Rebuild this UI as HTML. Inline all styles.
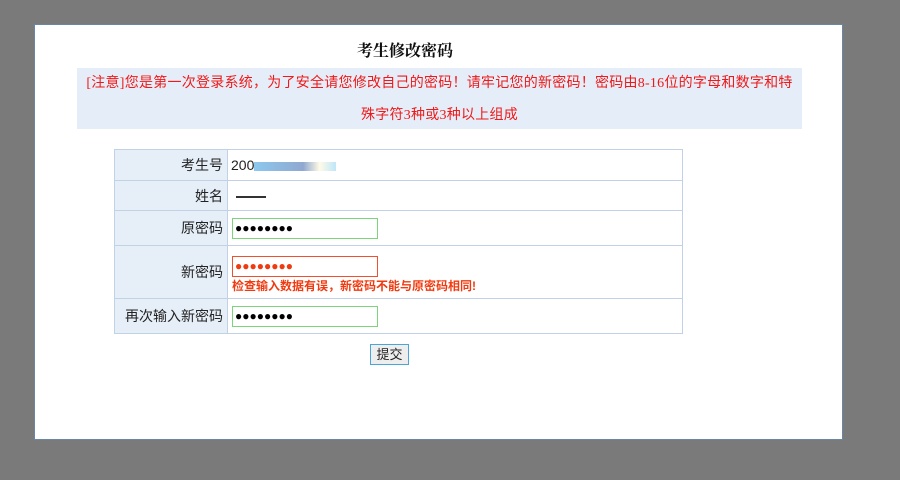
<!DOCTYPE html>
<html><head><meta charset="utf-8"><style>
*{margin:0;padding:0;box-sizing:border-box}
body{width:900px;height:480px;background:#7a7a7a;position:relative;overflow:hidden;font-family:"Liberation Sans","Noto Sans CJK SC","WenQuanYi Zen Hei",sans-serif}
.panel{position:absolute;left:34px;top:24px;width:809px;height:416px;background:#fff;border:1px solid #6a86a6}
.abs{position:absolute}
.title{left:0;width:740px;top:13px;text-align:center;font-family:"Liberation Serif","Noto Serif CJK SC",serif;font-weight:bold;font-size:16px;color:#111}
.notice{left:42px;top:43px;width:725px;height:61px;background:#e5eef8;color:#f01818;font-size:14px;line-height:32px;text-align:center;padding:0;letter-spacing:0.25px;font-family:"Liberation Serif","Noto Sans CJK SC",serif}
.t{position:absolute;left:79px;top:124px;width:569px;border-collapse:collapse}
.t td{border:1px solid #c2d2e6;font-size:14px;color:#222}
.t td.l{background:#e6eef8;width:113px;text-align:right;padding-right:4px}
.inp{display:inline-block;width:146px;height:21px;border:1px solid #7cd47c;margin-left:4px;vertical-align:middle;font-size:12px;line-height:19px;padding-left:2px;color:#000;font-weight:bold}
.err{color:#f03a10;font-size:12px;font-weight:bold;margin-left:4px}
.btn{left:335px;top:319px;width:39px;height:21px;border:1px solid #4aa6d8;background:#eee;font-size:13px;text-align:center;line-height:19px;color:#222}
</style></head><body>
<div class="panel">
<div class="abs title">考生修改密码</div>
<div class="abs notice">[注意]您是第一次登录系统，为了安全请您修改自己的密码！请牢记您的新密码！密码由8-16位的字母和数字和特<br>殊字符3种或3种以上组成</div>
<table class="t">
<tr style="height:31px"><td class="l">考生号</td><td><span style="margin-left:3px">200</span><span style="display:inline-block;width:82px;height:9px;background:linear-gradient(90deg,#8cc8ee,#90a8d0 60%,#fffbe6 80%,#bfe6fa);vertical-align:middle"></span></td></tr>
<tr style="height:30px"><td class="l">姓名</td><td><span style="display:inline-block;width:30px;height:2px;background:#333;margin-left:8px;vertical-align:middle"></span></td></tr>
<tr style="height:35px"><td class="l">原密码</td><td><span class="inp">●●●●●●●●</span></td></tr>
<tr style="height:53px"><td class="l">新密码</td><td><span class="inp" style="border-color:#f05030;color:#f03a10;margin-top:6px">●●●●●●●●</span><br><span class="err">检查输入数据有误，新密码不能与原密码相同!</span></td></tr>
<tr style="height:35px"><td class="l">再次输入新密码</td><td><span class="inp">●●●●●●●●</span></td></tr>
</table>
<div class="abs btn">提交</div>
</div>
</body></html>
